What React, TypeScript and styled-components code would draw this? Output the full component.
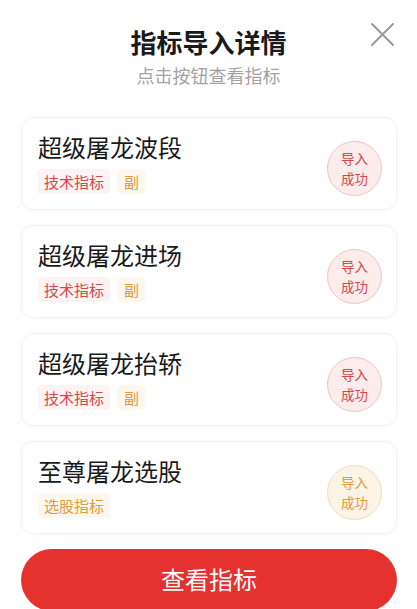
import styled, { createGlobalStyle } from "styled-components";

const GlobalStyle = createGlobalStyle`
  html, body {
    margin: 0;
    padding: 0;
    background: #ffffff;
  }
  body {
    font-family: "Noto Sans CJK SC", "Noto Sans", sans-serif;
  }
`;

const COLORS = {
  title: "#1a1a1a",
  sub: "#a3a3a3",
  red: "#d2494b",
  redTag: "#fdf3f3",
  redBadge: "#fcecec",
  redBorder: "#eec6c6",
  orange: "#e09a40",
  orangeTag: "#fdf7ee",
  orangeBadge: "#fdf4e8",
  orangeBorder: "#f1dbc0",
  button: "#e5322f",
};

const Sheet = styled.div`
  position: relative;
  width: 417px;
  height: 609px;
  overflow: hidden;
  padding-top: 27px;
  box-sizing: border-box;
`;

const Header = styled.div`
  display: flex;
  flex-direction: column;
  align-items: center;
`;

const Title = styled.h1`
  margin: 0;
  font-size: 26px;
  line-height: 30px;
  font-weight: 700;
  color: ${COLORS.title};
`;

const SubTitle = styled.div`
  margin-top: 6px;
  font-size: 18px;
  line-height: 24px;
  color: ${COLORS.sub};
`;

const CloseButton = styled.button`
  position: absolute;
  top: 23px;
  right: 23px;
  width: 23px;
  height: 23px;
  padding: 0;
  border: none;
  background: none;
  cursor: pointer;
`;

const List = styled.div`
  display: flex;
  flex-direction: column;
  gap: 15px;
  margin: 30px 20px 0 21px;
`;

const Card = styled.div`
  display: flex;
  justify-content: space-between;
  align-items: flex-start;
  height: 93px;
  box-sizing: border-box;
  padding: 14px 14px 0 16px;
  border: 1px solid #f1f1f1;
  border-radius: 12px;
  box-shadow: 0 1px 4px rgba(0, 0, 0, 0.03);
`;

const Info = styled.div`
  display: flex;
  flex-direction: column;
`;

const Name = styled.div`
  font-size: 24px;
  line-height: 30px;
  color: ${COLORS.title};
`;

const Tags = styled.div`
  display: flex;
  gap: 8px;
  margin-top: 7px;
`;

const Tag = styled.span<{ $tone: Tone }>`
  display: inline-block;
  height: 25px;
  line-height: 25px;
  padding: 0 6px;
  border-radius: 4px;
  font-size: 15px;
  color: ${(p) => (p.$tone === "red" ? COLORS.red : COLORS.orange)};
  background: ${(p) => (p.$tone === "red" ? COLORS.redTag : COLORS.orangeTag)};
`;

const Badge = styled.div<{ $tone: Tone }>`
  display: flex;
  align-items: center;
  justify-content: center;
  width: 55px;
  height: 55px;
  margin-top: 9px;
  box-sizing: border-box;
  border-radius: 50%;
  font-size: 13.5px;
  line-height: 19.5px;
  text-align: center;
  color: ${(p) => (p.$tone === "red" ? COLORS.red : COLORS.orange)};
  background: ${(p) =>
    p.$tone === "red" ? COLORS.redBadge : COLORS.orangeBadge};
  border: 1px solid
    ${(p) => (p.$tone === "red" ? COLORS.redBorder : COLORS.orangeBorder)};
`;

const ViewButton = styled.button`
  display: block;
  width: 376px;
  height: 62px;
  margin: 15px 0 0 21px;
  padding: 0 0 3px;
  border: none;
  border-radius: 31px;
  background: ${COLORS.button};
  color: #ffffff;
  font-family: inherit;
  font-size: 24px;
  cursor: pointer;
`;

type Tone = "red" | "orange";

type Item = {
  name: string;
  tags: { label: string; tone: Tone }[];
  tone: Tone;
};

const techTags: Item["tags"] = [
  { label: "技术指标", tone: "red" },
  { label: "副", tone: "orange" },
];

const items: Item[] = [
  { name: "超级屠龙波段", tags: techTags, tone: "red" },
  { name: "超级屠龙进场", tags: techTags, tone: "red" },
  { name: "超级屠龙抬轿", tags: techTags, tone: "red" },
  {
    name: "至尊屠龙选股",
    tags: [{ label: "选股指标", tone: "orange" }],
    tone: "orange",
  },
];

const App = () => {
  return (
    <>
      <GlobalStyle />
      <Sheet>
        <Header>
          <Title>指标导入详情</Title>
          <SubTitle>点击按钮查看指标</SubTitle>
        </Header>
        <CloseButton aria-label="关闭">
          <svg width="23" height="23" viewBox="0 0 23 23">
            <path
              d="M1 1 L22 22 M22 1 L1 22"
              stroke="#9a9a9a"
              strokeWidth="2"
              strokeLinecap="round"
            />
          </svg>
        </CloseButton>
        <List>
          {items.map((item) => (
            <Card key={item.name}>
              <Info>
                <Name>{item.name}</Name>
                <Tags>
                  {item.tags.map((t) => (
                    <Tag key={t.label} $tone={t.tone}>
                      {t.label}
                    </Tag>
                  ))}
                </Tags>
              </Info>
              <Badge $tone={item.tone}>
                <span>
                  导入
                  <br />
                  成功
                </span>
              </Badge>
            </Card>
          ))}
        </List>
        <ViewButton>查看指标</ViewButton>
      </Sheet>
    </>
  );
};

export default App;
